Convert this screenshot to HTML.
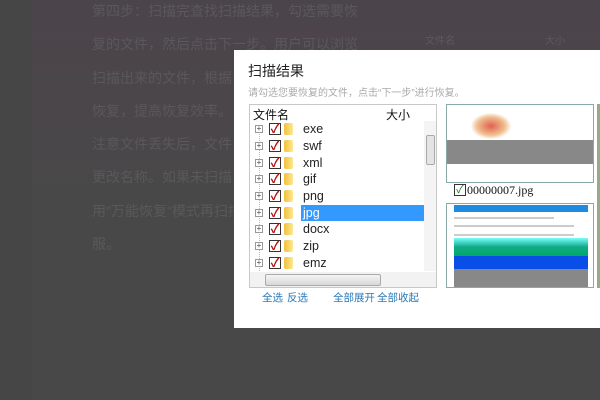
<!DOCTYPE html>
<html><head><meta charset="utf-8"><style>
*{margin:0;padding:0;box-sizing:border-box}
body{width:600px;height:400px;overflow:hidden;background:#464646;font-family:"Liberation Sans","Noto Sans CJK SC",sans-serif;position:relative}
.a{position:absolute}
.bg{left:32px;top:0;width:568px;height:400px;background:#494849}
.top{left:32px;top:0;width:568px;height:200px;background:linear-gradient(#4c444b,#494849)}
.txt{left:92px;top:-5px;color:#5a585a;font-size:14px;line-height:33.3px;white-space:nowrap}
.dlg{left:234px;top:50px;width:370px;height:278px;background:#fff}
.row{position:absolute;left:0;height:17px;width:180px;font-size:12.5px;color:#222}
.plus{position:absolute;left:5px;top:4px;width:8px;height:8px;border:1px solid #999;background:#fff;font-size:8px;line-height:6px;text-align:center;color:#444}
.cb{position:absolute;left:19px;top:2px;width:12px;height:12px;border:1px solid #333;background:#fff;color:#b01010;font-size:12px;line-height:10px;text-align:center;font-weight:bold}
.fd{position:absolute;left:34px;top:2px;width:9px;height:12px;background:linear-gradient(90deg,#f0c040,#ffe890);border-radius:2px}
.lbl{position:absolute;left:51px;top:0;line-height:16px;padding:0 2px}
.lk{color:#2a7ab8;font-size:10.5px;top:290px}
</style></head><body>
<div class="a bg"></div><div class="a top"></div>
<div class="a txt">第四步：扫描完查找扫描结果，勾选需要恢<br>复的文件，然后点击下一步。用户可以浏览<br>扫描出来的文件，根据<br>恢复，提高恢复效率。<br>注意文件丢失后，文件<br>更改名称。如果未扫描<br>用"万能恢复"模式再扫描<br>服。</div>
<div class="a" style="left:425px;top:32px;color:#5e5a5e;font-size:10px">文件名</div>
<div class="a" style="left:545px;top:32px;color:#5e5a5e;font-size:10px">大小</div>
<div class="a dlg"></div>
<div class="a" style="left:248px;top:61px;font-size:14px;color:#222">扫描结果</div>
<div class="a" style="left:248px;top:84px;font-size:10px;color:#aaa">请勾选您要恢复的文件，点击“下一步”进行恢复。</div>
<div class="a" style="left:249px;top:104px;width:188px;height:184px;border:1px solid #c8c8c8;background:#fff;overflow:hidden">
 <div class="a" style="left:3px;top:1px;font-size:12px;color:#111">文件名</div>
 <div class="a" style="left:136px;top:1px;font-size:12px;color:#111">大小</div>
 <div class="a" style="left:9px;top:20px;width:0;height:150px;border-left:1px dotted #bbb"></div>
 <div class="row" style="top:16px"><div class="plus">+</div><div class="cb">✓</div><div class="fd"></div><div class="lbl">exe</div></div>
 <div class="row" style="top:33px"><div class="plus">+</div><div class="cb">✓</div><div class="fd"></div><div class="lbl">swf</div></div>
 <div class="row" style="top:50px"><div class="plus">+</div><div class="cb">✓</div><div class="fd"></div><div class="lbl">xml</div></div>
 <div class="row" style="top:66px"><div class="plus">+</div><div class="cb">✓</div><div class="fd"></div><div class="lbl">gif</div></div>
 <div class="row" style="top:83px"><div class="plus">+</div><div class="cb">✓</div><div class="fd"></div><div class="lbl">png</div></div>
 <div class="row" style="top:100px"><div class="plus">+</div><div class="cb">✓</div><div class="fd"></div><div class="lbl" style="background:#3399ff;color:#fff;width:125px">jpg</div></div>
 <div class="row" style="top:116px"><div class="plus">+</div><div class="cb">✓</div><div class="fd"></div><div class="lbl">docx</div></div>
 <div class="row" style="top:133px"><div class="plus">+</div><div class="cb">✓</div><div class="fd"></div><div class="lbl">zip</div></div>
 <div class="row" style="top:150px"><div class="plus">+</div><div class="cb">✓</div><div class="fd"></div><div class="lbl">emz</div></div>
 <div class="a" style="left:174px;top:16px;width:13px;height:150px;background:#f4f4f4"></div>
 <div class="a" style="left:176px;top:30px;width:9px;height:30px;background:#e4e4e4;border:1px solid #aaa;border-radius:2px"></div>
 <div class="a" style="left:0;top:167px;width:187px;height:16px;background:#f2f2f2"></div>
 <div class="a" style="left:15px;top:169px;width:116px;height:12px;background:linear-gradient(#f4f4f4,#d8d8d8);border:1px solid #aaa;border-radius:2px"></div>
</div>
<span class="a lk" style="left:262px">全选</span>
<span class="a lk" style="left:287px">反选</span>
<span class="a lk" style="left:333px">全部展开</span>
<span class="a lk" style="left:377px">全部收起</span>
<div class="a" style="left:446px;top:104px;width:148px;height:79px;border:1px solid #8aa;background:#fff;overflow:hidden">
 <div class="a" style="left:24px;top:8px;width:40px;height:26px;background:radial-gradient(#e06050,#f0c090 50%,#fff 72%)"></div>
 <div class="a" style="left:0;top:35px;width:148px;height:24px;background:#888"></div>
</div>
<div class="a" style="left:454px;top:184px;width:12px;height:12px;border:1px solid #333;color:#1a7a1a;font-size:11px;line-height:10px;text-align:center">✓</div>
<div class="a" style="left:467px;top:183px;font-family:'Liberation Serif',serif;font-size:12px;color:#111">00000007.jpg</div>
<div class="a" style="left:446px;top:203px;width:148px;height:85px;border:1px solid #8aa;background:#fff;overflow:hidden">
 <div class="a" style="left:7px;top:1px;width:134px;height:7px;background:#1f8be0"></div>
 <div class="a" style="left:7px;top:13px;width:100px;height:2px;background:#ccc"></div>
 <div class="a" style="left:7px;top:21px;width:120px;height:2px;background:#ccc"></div>
 <div class="a" style="left:7px;top:30px;width:120px;height:2px;background:#ccc"></div>
 <div class="a" style="left:7px;top:34px;width:134px;height:18px;background:linear-gradient(#7ff,#1a8 50%,#0a6)"></div>
 <div class="a" style="left:7px;top:52px;width:134px;height:13px;background:#0a4ee8"></div>
 <div class="a" style="left:7px;top:65px;width:134px;height:20px;background:#888"></div>
</div>
<div class="a" style="left:597px;top:104px;width:3px;height:184px;background:#9a8;border-left:1px solid #8aa"></div>
</body></html>
